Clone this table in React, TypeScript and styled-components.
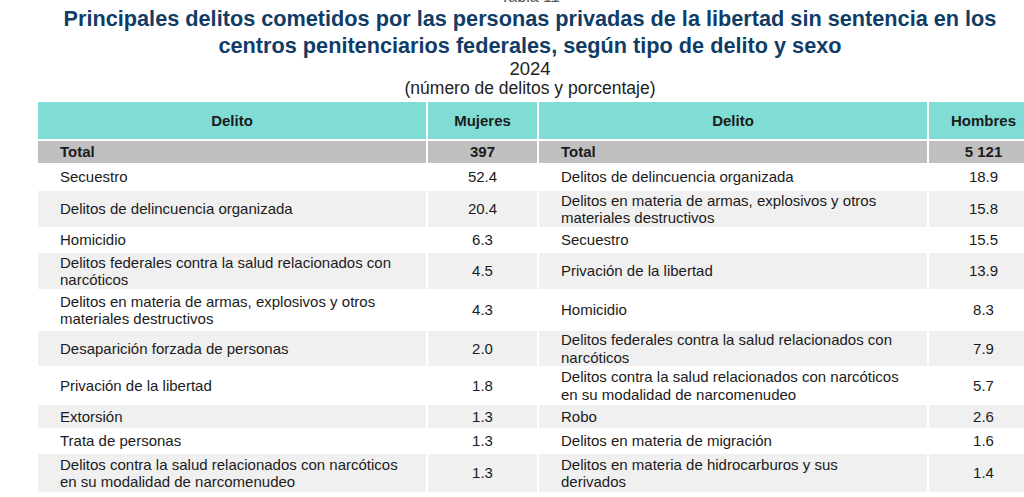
import React from 'react';
import styled, { createGlobalStyle } from 'styled-components';

const GlobalStyle = createGlobalStyle`
  html, body {
    margin: 0;
    padding: 0;
    background: #ffffff;
    overflow: hidden;
  }
  body {
    font-family: 'Liberation Sans', Arial, sans-serif;
    color: #1b1b1b;
  }
`;

const Page = styled.div`
  width: 1024px;
  height: 497px;
  padding-left: 38px;
  box-sizing: border-box;
  overflow: hidden;
`;

const Heading = styled.header`
  width: 984px;
  text-align: center;
`;

const Caption = styled.div`
  margin-top: -11px;
  font-size: 16px;
  line-height: 16px;
  color: #555;
`;

const Title = styled.h1`
  margin: 0;
  font-size: 21.7px;
  line-height: 27px;
  font-weight: 700;
  color: #113c66;
`;

const Year = styled.div`
  font-size: 18.5px;
  line-height: 20px;
  color: #222;
`;

const Units = styled.div`
  font-size: 17.5px;
  line-height: 19px;
  color: #222;
`;

const Table = styled.div`
  margin-top: 4px;
  display: grid;
  grid-template-columns: 388px 109px 388px 109px;
  column-gap: 2px;
  row-gap: 2px;
  font-size: 15px;
`;

const HeaderCell = styled.div`
  height: 37px;
  background: #80ddd6;
  font-weight: 700;
  display: flex;
  align-items: center;
  justify-content: center;
`;

type Shade = 'total' | 'alt' | 'plain';

const Cell = styled.div<{ $shade: Shade; $h: number; $num?: boolean }>`
  height: ${(p) => p.$h}px;
  background: ${(p) =>
    p.$shade === 'total' ? '#bfbfbf' : p.$shade === 'alt' ? '#f0f0f0' : '#ffffff'};
  font-weight: ${(p) => (p.$shade === 'total' ? 700 : 400)};
  line-height: 17.5px;
  white-space: pre-line;
  display: flex;
  align-items: center;
  justify-content: ${(p) => (p.$num ? 'center' : 'flex-start')};
  padding-left: ${(p) => (p.$num ? 0 : 22)}px;
  box-sizing: border-box;
`;

const rows = [
  { l: 'Secuestro', lv: '52.4', r: 'Delitos de delincuencia organizada', rv: '18.9', h: 24 },
  {
    l: 'Delitos de delincuencia organizada',
    lv: '20.4',
    r: 'Delitos en materia de armas, explosivos y otros\nmateriales destructivos',
    rv: '15.8',
    h: 36,
  },
  { l: 'Homicidio', lv: '6.3', r: 'Secuestro', rv: '15.5', h: 22 },
  {
    l: 'Delitos federales contra la salud relacionados con\nnarcóticos',
    lv: '4.5',
    r: 'Privación de la libertad',
    rv: '13.9',
    h: 36,
  },
  {
    l: 'Delitos en materia de armas, explosivos y otros\nmateriales destructivos',
    lv: '4.3',
    r: 'Homicidio',
    rv: '8.3',
    h: 38,
  },
  {
    l: 'Desaparición forzada de personas',
    lv: '2.0',
    r: 'Delitos federales contra la salud relacionados con\nnarcóticos',
    rv: '7.9',
    h: 35,
  },
  {
    l: 'Privación de la libertad',
    lv: '1.8',
    r: 'Delitos contra la salud relacionados con narcóticos\nen su modalidad de narcomenudeo',
    rv: '5.7',
    h: 35,
  },
  { l: 'Extorsión', lv: '1.3', r: 'Robo', rv: '2.6', h: 23 },
  { l: 'Trata de personas', lv: '1.3', r: 'Delitos en materia de migración', rv: '1.6', h: 22 },
  {
    l: 'Delitos contra la salud relacionados con narcóticos\nen su modalidad de narcomenudeo',
    lv: '1.3',
    r: 'Delitos en materia de hidrocarburos y sus\nderivados',
    rv: '1.4',
    h: 38,
  },
];

export default function App() {
  return (
    <>
      <GlobalStyle />
      <Page>
        <Heading>
          <Caption>Tabla 11</Caption>
          <Title>
            Principales delitos cometidos por las personas privadas de la libertad sin sentencia en los
            <br />
            centros penitenciarios federales, según tipo de delito y sexo
          </Title>
          <Year>2024</Year>
          <Units>(número de delitos y porcentaje)</Units>
        </Heading>
        <Table>
          <HeaderCell>Delito</HeaderCell>
          <HeaderCell>Mujeres</HeaderCell>
          <HeaderCell>Delito</HeaderCell>
          <HeaderCell>Hombres</HeaderCell>

          <Cell $shade="total" $h={22}>Total</Cell>
          <Cell $shade="total" $h={22} $num>397</Cell>
          <Cell $shade="total" $h={22}>Total</Cell>
          <Cell $shade="total" $h={22} $num>5 121</Cell>

          {rows.map((row, i) => {
            const shade: Shade = i % 2 === 1 ? 'alt' : 'plain';
            return (
              <React.Fragment key={i}>
                <Cell $shade={shade} $h={row.h}>{row.l}</Cell>
                <Cell $shade={shade} $h={row.h} $num>{row.lv}</Cell>
                <Cell $shade={shade} $h={row.h}>{row.r}</Cell>
                <Cell $shade={shade} $h={row.h} $num>{row.rv}</Cell>
              </React.Fragment>
            );
          })}
        </Table>
      </Page>
    </>
  );
}
